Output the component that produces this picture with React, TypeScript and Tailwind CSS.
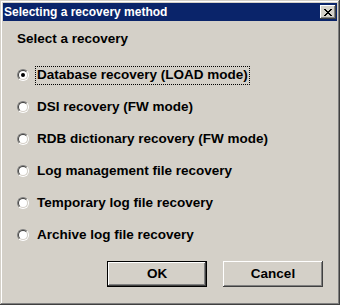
import React from "react";

const options = [
  "Database recovery (LOAD mode)",
  "DSI recovery (FW mode)",
  "RDB dictionary recovery (FW mode)",
  "Log management file recovery",
  "Temporary log file recovery",
  "Archive log file recovery",
];

function Radio({ checked }: { checked?: boolean }) {
  return (
    <div className="w-3 h-3 shrink-0 rounded-full border border-t-[#808080] border-l-[#808080] border-b-white border-r-white">
      <div className="w-full h-full rounded-full border border-t-[#404040] border-l-[#404040] border-b-[#d4d0c8] border-r-[#d4d0c8] bg-white flex items-center justify-center">
        {checked && <div className="w-1 h-1 rounded-full bg-black" />}
      </div>
    </div>
  );
}

function WinButton({ label, isDefault }: { label: string; isDefault?: boolean }) {
  return (
    <div className={isDefault ? "w-[100px] h-[26px] border border-black" : "w-[100px] h-[26px]"}>
      <div className="w-full h-full bg-[#d4d0c8] shadow-[inset_-1px_-1px_#404040,inset_1px_1px_#ffffff,inset_-2px_-2px_#808080] flex items-center justify-center text-[13.5px] font-bold text-black">
        {label}
      </div>
    </div>
  );
}

export default function App() {
  return (
    <div className="w-[340px] h-[305px] bg-[#d4d0c8] p-[3px] flex flex-col shadow-[inset_-1px_-1px_#404040,inset_1px_1px_#d4d0c8,inset_-2px_-2px_#808080,inset_2px_2px_#ffffff] font-['Liberation_Sans',Arial,sans-serif] select-none">
      {/* Title bar */}
      <div className="h-[18px] bg-[#0a246a] flex items-center justify-between pl-[1px] pr-[1px]">
        <span className="text-white text-[12px] font-bold leading-none">Selecting a recovery method</span>
        <div className="w-4 h-[14px] bg-[#d4d0c8] shadow-[inset_-1px_-1px_#404040,inset_1px_1px_#ffffff,inset_-2px_-2px_#808080] flex items-center justify-center">
          <svg width="8" height="7" viewBox="0 0 8 7" shapeRendering="crispEdges">
            <path d="M0 0h2v1H0zM6 0h2v1H6zM1 1h2v1H1zM5 1h2v1H5zM2 2h4v1H2zM3 3h2v1H3zM2 4h4v1H2zM1 5h2v1H1zM5 5h2v1H5zM0 6h2v1H0zM6 6h2v1H6z" fill="#000" />
          </svg>
        </div>
      </div>

      {/* Body */}
      <div className="flex-1 flex flex-col pl-[14px] pr-[14px] pt-[10px]">
        <div className="h-4 flex items-center text-[13.5px] font-bold text-black">Select a recovery</div>
        <div className="mt-[12px] flex flex-col">
          {options.map((label, i) => (
            <div key={label} className="h-8 flex items-center">
              <Radio checked={i === 0} />
              <div
                className={
                  i === 0
                    ? "ml-[6px] px-[1px] h-[19px] flex items-center border border-dotted border-black text-[13.5px] font-bold text-black"
                    : "ml-[7px] px-[1px] h-[19px] flex items-center text-[13.5px] font-bold text-black"
                }
              >
                {label}
              </div>
            </div>
          ))}
        </div>
        <div className="mt-[10px] flex justify-end gap-4 pr-[0px]">
          <WinButton label="OK" isDefault />
          <WinButton label="Cancel" />
        </div>
      </div>
    </div>
  );
}
